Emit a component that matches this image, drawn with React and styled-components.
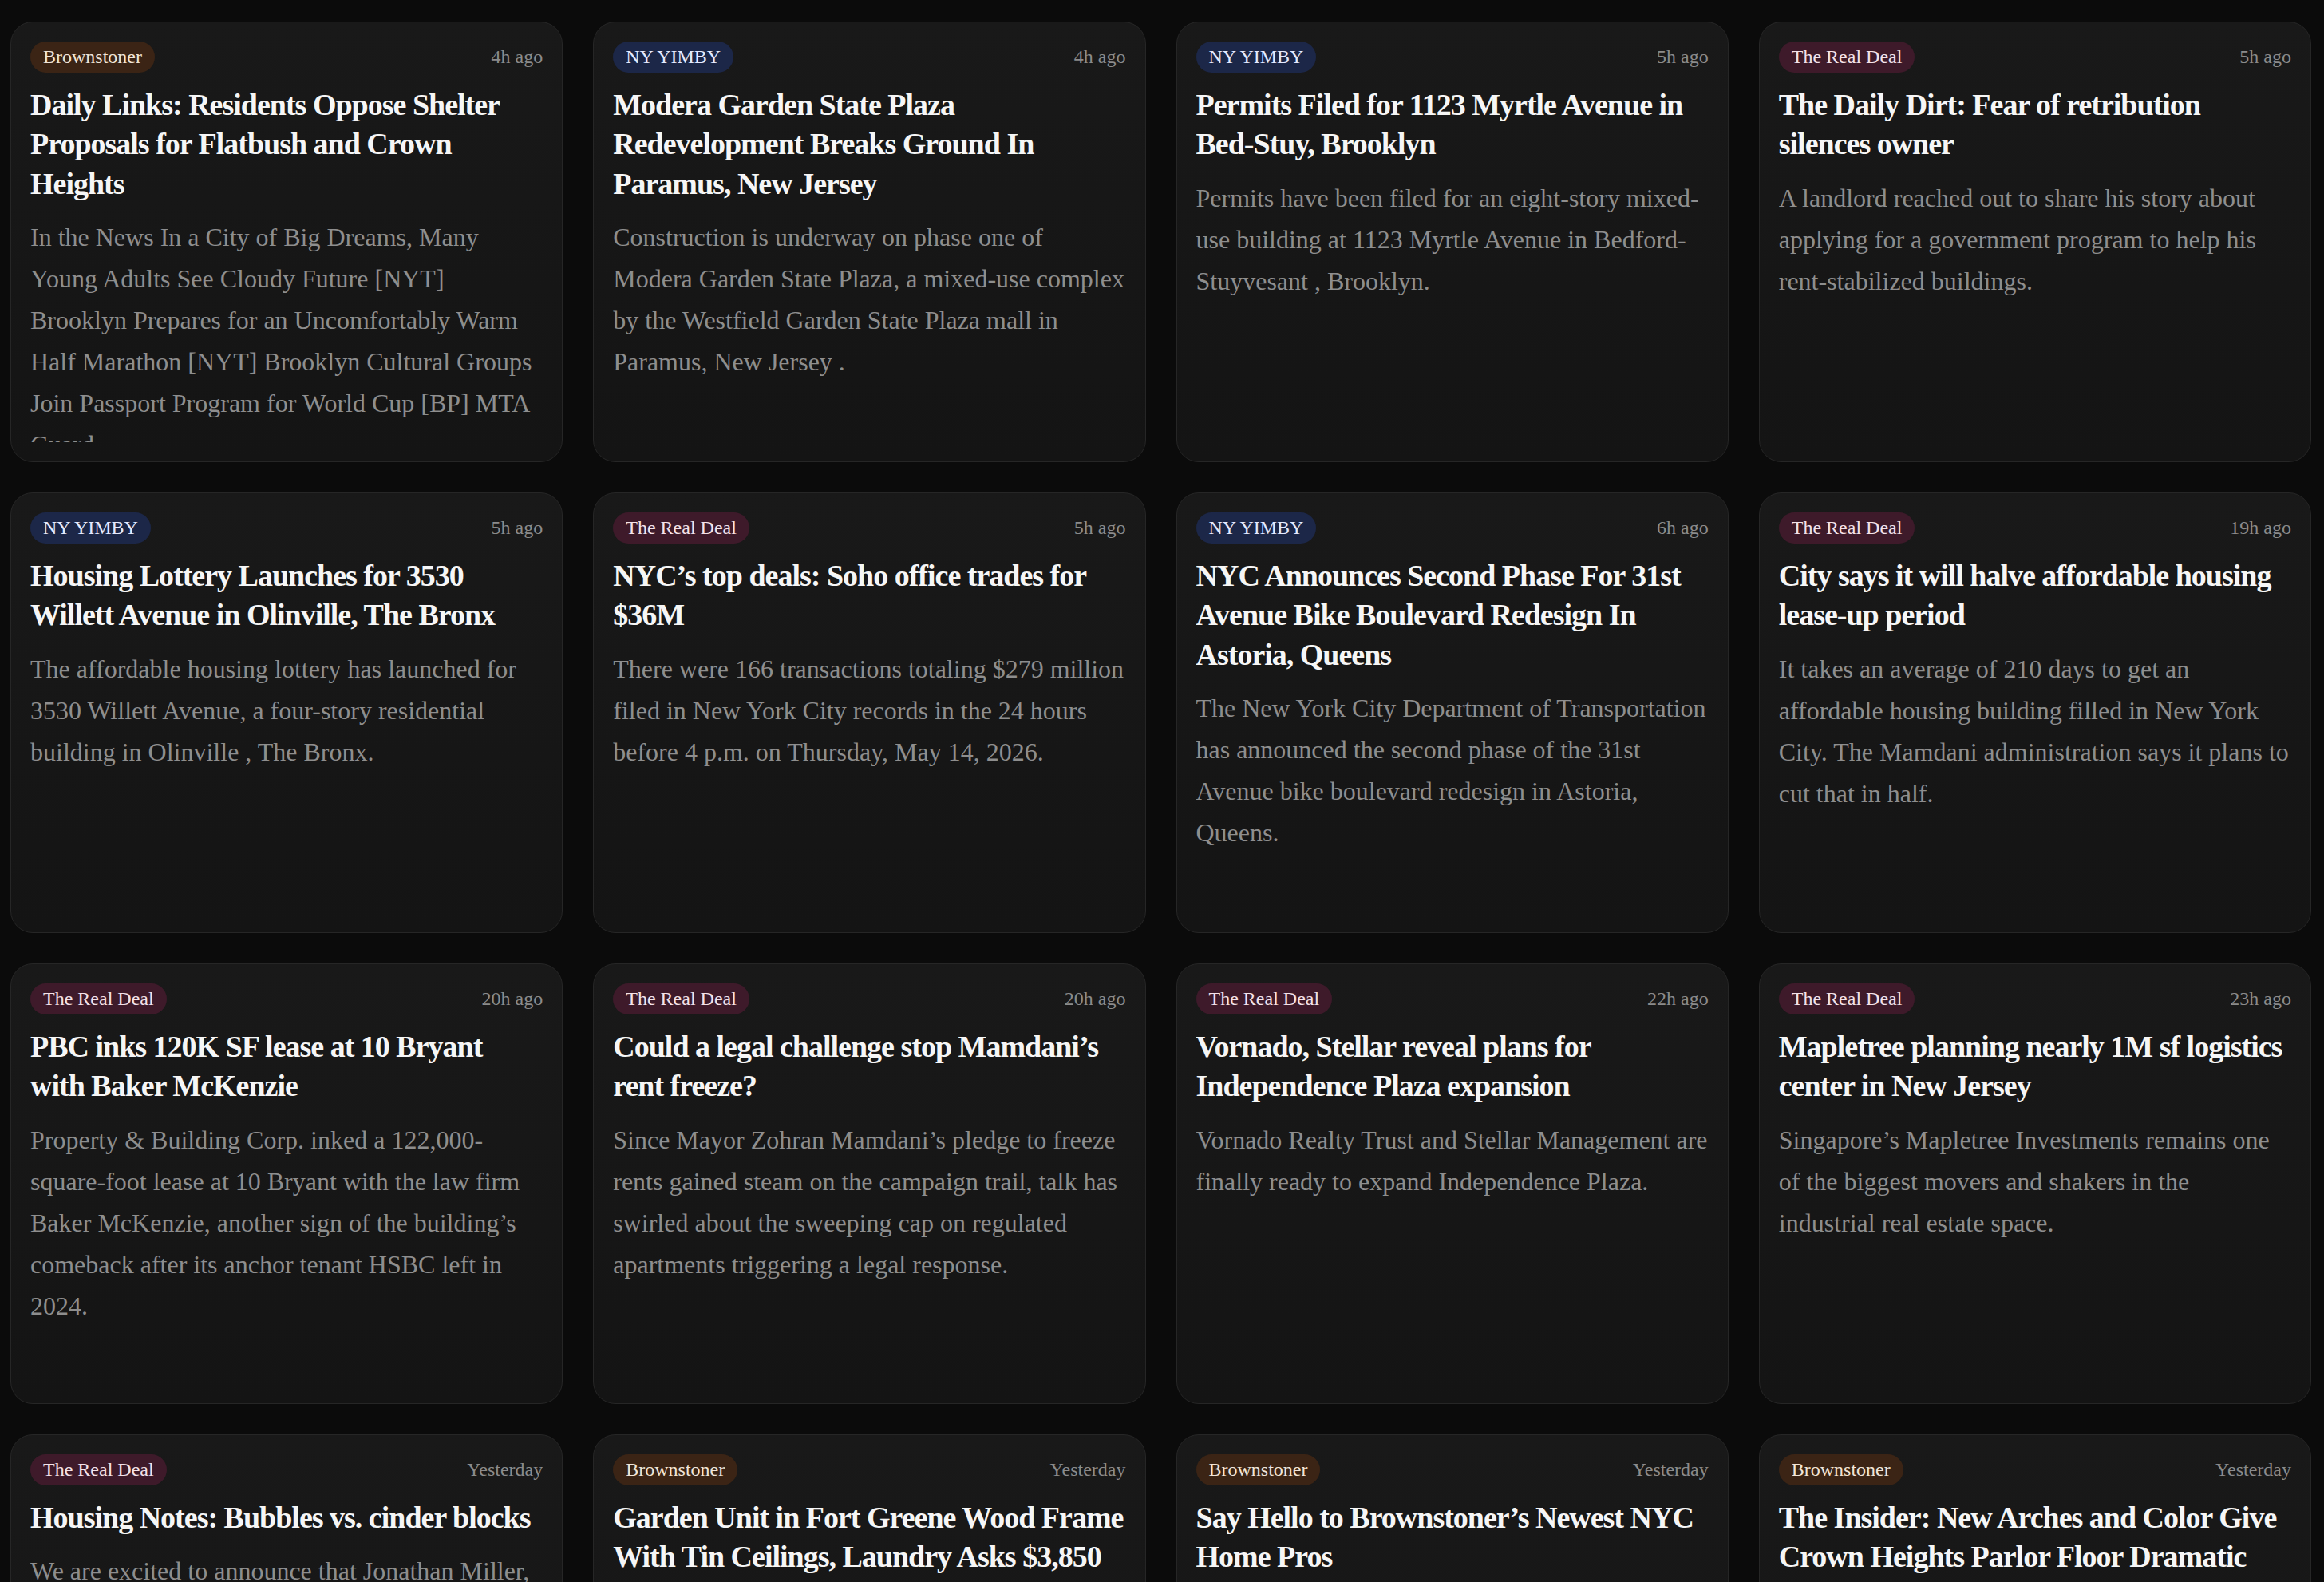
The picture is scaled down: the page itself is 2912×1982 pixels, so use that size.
import React from 'react';
import styled, { createGlobalStyle } from 'styled-components';

const GlobalStyle = createGlobalStyle`
  html, body {
    margin: 0;
    padding: 0;
    background: #0b0b0b;
  }
  * {
    box-sizing: border-box;
  }
`;

const sources = {
  brownstoner: { label: 'Brownstoner', bg: '#3b2415', fg: '#f1e5d8' },
  yimby: { label: 'NY YIMBY', bg: '#1c2748', fg: '#e4eaff' },
  trd: { label: 'The Real Deal', bg: '#3e1a2a', fg: '#f4e2e9' },
};

const stories = [
  {
    source: 'brownstoner',
    time: '4h ago',
    title: 'Daily Links: Residents Oppose Shelter Proposals for Flatbush and Crown Heights',
    summary:
      'In the News In a City of Big Dreams, Many Young Adults See Cloudy Future [NYT] Brooklyn Prepares for an Uncomfortably Warm Half Marathon [NYT] Brooklyn Cultural Groups Join Passport Program for World Cup [BP] MTA Guard',
  },
  {
    source: 'yimby',
    time: '4h ago',
    title: 'Modera Garden State Plaza Redevelopment Breaks Ground In Paramus, New Jersey',
    summary:
      'Construction is underway on phase one of Modera Garden State Plaza, a mixed-use complex by the Westfield Garden State Plaza mall in Paramus, New Jersey .',
  },
  {
    source: 'yimby',
    time: '5h ago',
    title: 'Permits Filed for 1123 Myrtle Avenue in Bed-Stuy, Brooklyn',
    summary:
      'Permits have been filed for an eight-story mixed-use building at 1123 Myrtle Avenue in Bedford-Stuyvesant , Brooklyn.',
  },
  {
    source: 'trd',
    time: '5h ago',
    title: 'The Daily Dirt: Fear of retribution silences owner',
    summary:
      'A landlord reached out to share his story about applying for a government program to help his rent-stabilized buildings.',
  },
  {
    source: 'yimby',
    time: '5h ago',
    title: 'Housing Lottery Launches for 3530 Willett Avenue in Olinville, The Bronx',
    summary:
      'The affordable housing lottery has launched for 3530 Willett Avenue, a four-story residential building in Olinville , The Bronx.',
  },
  {
    source: 'trd',
    time: '5h ago',
    title: 'NYC\u2019s top deals: Soho office trades for $36M',
    summary:
      'There were 166 transactions totaling $279 million filed in New York City records in the 24 hours before 4 p.m. on Thursday, May 14, 2026.',
  },
  {
    source: 'yimby',
    time: '6h ago',
    title: 'NYC Announces Second Phase For 31st Avenue Bike Boulevard Redesign In Astoria, Queens',
    summary:
      'The New York City Department of Transportation has announced the second phase of the 31st Avenue bike boulevard redesign in Astoria, Queens.',
  },
  {
    source: 'trd',
    time: '19h ago',
    title: 'City says it will halve affordable housing lease-up period',
    summary:
      'It takes an average of 210 days to get an affordable housing building filled in New York City. The Mamdani administration says it plans to cut that in half.',
  },
  {
    source: 'trd',
    time: '20h ago',
    title: 'PBC inks 120K SF lease at 10 Bryant with Baker McKenzie',
    summary:
      'Property & Building Corp. inked a 122,000-square-foot lease at 10 Bryant with the law firm Baker McKenzie, another sign of the building\u2019s comeback after its anchor tenant HSBC left in 2024.',
  },
  {
    source: 'trd',
    time: '20h ago',
    title: 'Could a legal challenge stop Mamdani\u2019s rent freeze?',
    summary:
      'Since Mayor Zohran Mamdani\u2019s pledge to freeze rents gained steam on the campaign trail, talk has swirled about the sweeping cap on regulated apartments triggering a legal response.',
  },
  {
    source: 'trd',
    time: '22h ago',
    title: 'Vornado, Stellar reveal plans for Independence Plaza expansion',
    summary:
      'Vornado Realty Trust and Stellar Management are finally ready to expand Independence Plaza.',
  },
  {
    source: 'trd',
    time: '23h ago',
    title: 'Mapletree planning nearly 1M sf logistics center in New Jersey',
    summary:
      'Singapore\u2019s Mapletree Investments remains one of the biggest movers and shakers in the industrial real estate space.',
  },
  {
    source: 'trd',
    time: 'Yesterday',
    title: 'Housing Notes: Bubbles vs. cinder blocks',
    summary:
      'We are excited to announce that Jonathan Miller, the appraiser behind Housing Notes, is joining our team.',
  },
  {
    source: 'brownstoner',
    time: 'Yesterday',
    title: 'Garden Unit in Fort Greene Wood Frame With Tin Ceilings, Laundry Asks $3,850',
    summary:
      'This garden rental in a wood frame house in Fort Greene has tin ceilings, a washer and dryer and access to the backyard.',
  },
  {
    source: 'brownstoner',
    time: 'Yesterday',
    title: 'Say Hello to Brownstoner\u2019s Newest NYC Home Pros',
    summary:
      'Meet the latest architects, contractors and designers to join our directory of trusted NYC home pros.',
  },
  {
    source: 'brownstoner',
    time: 'Yesterday',
    title: 'The Insider: New Arches and Color Give Crown Heights Parlor Floor Dramatic Flair',
    summary:
      'A design team added arched openings and bold color to bring character back to a Crown Heights parlor floor.',
  },
];

const Grid = styled.main`
  display: grid;
  grid-template-columns: repeat(4, minmax(0, 1fr));
  grid-auto-rows: 552px;
  column-gap: 38px;
  row-gap: 38px;
  padding: 27px 16px 40px 13px;
  font-family: 'Liberation Serif', 'Times New Roman', serif;
`;

const Card = styled.article`
  display: flex;
  flex-direction: column;
  min-width: 0;
  padding: 24px;
  border: 1px solid #262626;
  border-radius: 28px;
  background: linear-gradient(180deg, #191919 0%, #141414 100%);
  overflow: hidden;
`;

const CardHeader = styled.div`
  display: flex;
  align-items: center;
  justify-content: space-between;
  flex-shrink: 0;
`;

const Badge = styled.span`
  display: inline-block;
  padding: 4px 16px;
  border-radius: 999px;
  background: ${(p) => p.$bg};
  color: ${(p) => p.$fg};
  font-size: 24px;
  line-height: 31px;
  white-space: nowrap;
`;

const Time = styled.span`
  color: #8b8b8b;
  font-size: 24px;
  line-height: 31px;
`;

const Title = styled.h2`
  margin: 16px 0 0;
  color: #f6f6f6;
  font-size: 38px;
  font-weight: 700;
  line-height: 1.3;
  letter-spacing: -1px;
  flex-shrink: 0;
`;

const Summary = styled.p`
  margin: 16px 0 0;
  color: #8e8e8e;
  font-size: 32px;
  line-height: 52px;
  flex: 1;
  min-height: 0;
  overflow: hidden;
`;

function StoryCard({ story }) {
  const src = sources[story.source];
  return (
    <Card>
      <CardHeader>
        <Badge $bg={src.bg} $fg={src.fg}>{src.label}</Badge>
        <Time>{story.time}</Time>
      </CardHeader>
      <Title>{story.title}</Title>
      <Summary>{story.summary}</Summary>
    </Card>
  );
}

export default function App() {
  return (
    <>
      <GlobalStyle />
      <Grid>
        {stories.map((story, i) => (
          <StoryCard key={i} story={story} />
        ))}
      </Grid>
    </>
  );
}
